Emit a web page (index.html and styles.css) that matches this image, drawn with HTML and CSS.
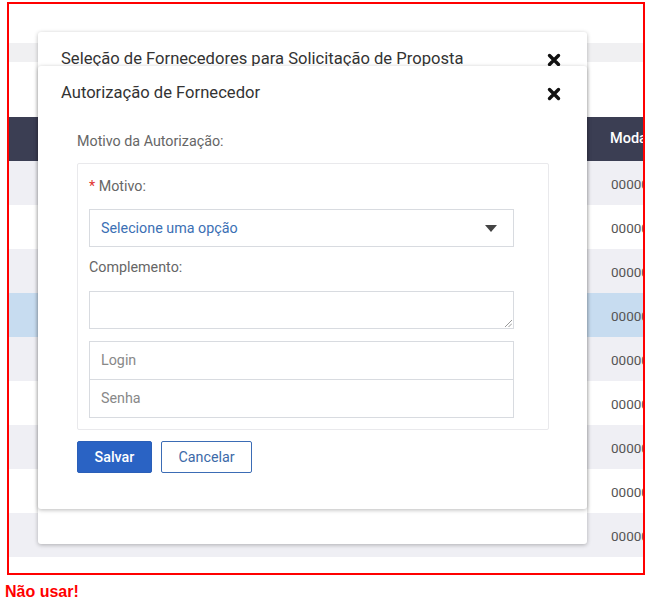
FILE: index.html
```html
<!DOCTYPE html>
<html lang="pt">
<head>
<meta charset="utf-8">
<title>Autorização de Fornecedor</title>
<link rel="stylesheet" href="styles.css">
</head>
<body>
<div class="frame">
  <div class="page">
    <div class="band"></div>
    <div class="thead">Modalidade</div>
    <div class="row odd">00000001</div>
    <div class="row">00000002</div>
    <div class="row odd">00000003</div>
    <div class="row selected">00000004</div>
    <div class="row odd">00000005</div>
    <div class="row">00000006</div>
    <div class="row odd">00000007</div>
    <div class="row">00000008</div>
    <div class="row odd">00000009</div>
    <div class="row"></div>
  </div>

  <div class="modal modal-back">
    <div class="modal-header">
      <span class="modal-title">Seleção de Fornecedores para Solicitação de Proposta</span>
      <svg class="close" viewBox="0 0 14 14" width="14" height="14"><path d="M2.5 2.5 L11.5 11.5 M11.5 2.5 L2.5 11.5" stroke="#111" stroke-width="3.4" stroke-linecap="round"/></svg>
    </div>
  </div>

  <div class="modal modal-front">
    <div class="modal-header">
      <span class="modal-title">Autorização de Fornecedor</span>
      <svg class="close" viewBox="0 0 14 14" width="14" height="14"><path d="M2.5 2.5 L11.5 11.5 M11.5 2.5 L2.5 11.5" stroke="#111" stroke-width="3.4" stroke-linecap="round"/></svg>
    </div>
    <div class="modal-body">
      <div class="section-label">Motivo da Autorização:</div>
      <div class="panel">
        <div class="field-label"><span class="req">*</span> Motivo:</div>
        <div class="select">
          <span>Selecione uma opção</span>
          <svg class="caret" viewBox="0 0 12 7" width="12" height="7"><path d="M0 0 H12 L6 7 Z" fill="#444"/></svg>
        </div>
        <div class="field-label second">Complemento:</div>
        <div class="textarea">
          <svg class="grip" viewBox="0 0 8 8" width="8" height="8"><path d="M1 8 L8 1 M4.5 8 L8 4.5" stroke="#999" stroke-width="1"/></svg>
        </div>
        <div class="input first">Login</div>
        <div class="input">Senha</div>
      </div>
      <div class="actions">
        <button class="btn btn-primary">Salvar</button>
        <button class="btn btn-outline">Cancelar</button>
      </div>
    </div>
  </div>
</div>
<div class="warning">Não usar!</div>
</body>
</html>
```

FILE: styles.css
```css
html, body {
  margin: 0;
  padding: 0;
  background: #ffffff;
  font-family: Roboto, "Liberation Sans", Arial, sans-serif;
}

.frame {
  position: relative;
  margin: 2px 0 0 7px;
  width: 634px;
  height: 569px;
  border: 2px solid #ff0000;
  overflow: hidden;
  background: #ffffff;
}

.page {
  display: flex;
  flex-direction: column;
}

.band {
  margin-top: 39px;
  height: 19px;
  background: #f0f0f2;
}

.thead {
  margin-top: 55px;
  height: 44px;
  background: #3b3e53;
  color: #ffffff;
  font-size: 14.5px;
  font-weight: 500;
  line-height: 44px;
  padding-left: 601px;
  white-space: nowrap;
}

.row {
  height: 44px;
  line-height: 46px;
  padding-left: 602px;
  font-size: 13.5px;
  color: #555555;
  background: #ffffff;
  white-space: nowrap;
}

.row.odd {
  background: #efeff4;
}

.row.selected {
  background: #c7dcf0;
}

.modal {
  position: absolute;
  left: 29px;
  width: 549px;
  background: #ffffff;
  border-radius: 3px;
  box-shadow: 0 1px 4px rgba(0, 0, 0, 0.28);
}

.modal-back {
  top: 28px;
  height: 512px;
}

.modal-front {
  top: 62px;
  height: 443px;
}

.modal-header {
  position: relative;
  padding: 17px 23px 0 23px;
  height: 20px;
}

.modal-title {
  font-size: 16.6px;
  line-height: 20px;
  color: #333333;
}

.close {
  position: absolute;
  right: 26px;
  top: 21px;
}

.modal-body {
  padding: 29px 0 0 39px;
}

.section-label {
  font-size: 14.3px;
  line-height: 18px;
  color: #666666;
}

.panel {
  margin-top: 13px;
  width: 447px;
  padding: 13px 12px 11px 11px;
  border: 1px solid #e9e9ec;
  border-radius: 2px;
}

.field-label {
  font-size: 14.3px;
  line-height: 18px;
  color: #666666;
}

.field-label.second {
  margin-top: 11px;
}

.req {
  color: #e0322f;
}

.select {
  margin-top: 14px;
  width: 423px;
  height: 36px;
  border: 1px solid #d8dbe0;
  display: flex;
  align-items: center;
  justify-content: space-between;
  box-sizing: content-box;
  font-size: 14.3px;
  color: #3b70b4;
}

.select span {
  padding-left: 11px;
}

.caret {
  margin-right: 16px;
}

.textarea {
  position: relative;
  margin-top: 15px;
  width: 423px;
  height: 36px;
  border: 1px solid #d8dbe0;
}

.grip {
  position: absolute;
  right: 1px;
  bottom: 1px;
}

.input {
  width: 412px;
  height: 37px;
  padding-left: 11px;
  border: 1px solid #d8dbe0;
  font-size: 14.3px;
  line-height: 37px;
  color: #888888;
  margin-top: -1px;
}

.input.first {
  margin-top: 12px;
}

.actions {
  display: flex;
  gap: 9px;
  margin-top: 11px;
}

.btn {
  height: 32px;
  border-radius: 2px;
  font-family: Roboto, "Liberation Sans", Arial, sans-serif;
  font-size: 14.3px;
  padding: 0;
  cursor: pointer;
}

.btn-primary {
  width: 75px;
  background: #2a63c4;
  border: 1px solid #2a5fb8;
  color: #ffffff;
  font-weight: 500;
}

.btn-outline {
  width: 91px;
  background: #ffffff;
  border: 1px solid #3b6cb5;
  color: #3d6aa8;
}

.warning {
  margin: 8px 0 0 5px;
  font-family: "Liberation Sans", Arial, sans-serif;
  font-weight: bold;
  font-size: 16px;
  line-height: 18px;
  color: #ff0000;
}
```
